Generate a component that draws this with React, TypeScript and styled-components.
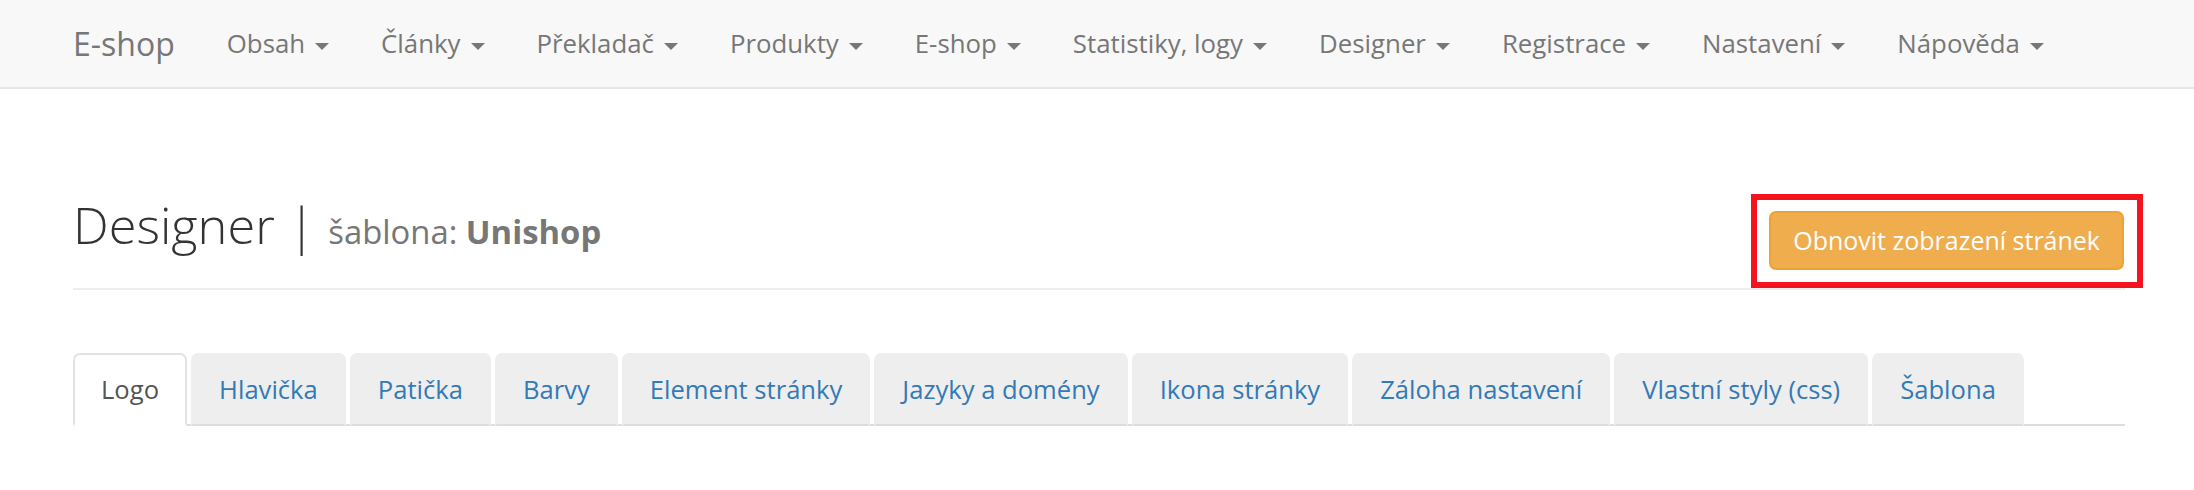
import React from "react";
import styled, { createGlobalStyle } from "styled-components";

const GlobalStyle = createGlobalStyle`
  body {
    margin: 0;
    background: #fff;
    font-family: "Open Sans", "Liberation Sans", sans-serif;
    color: #333;
  }
`;

const Navbar = styled.nav`
  display: flex;
  align-items: flex-start;
  padding-left: 47px;
  background-color: #f8f8f8;
  border-bottom: 2px solid #e7e7e7;
`;
const Brand = styled.a`
  padding: 26px;
  font-size: 32px;
  line-height: 35px;
  color: #777;
  text-decoration: none;
`;
const NavMenu = styled.ul`
  display: flex;
  list-style: none;
  margin: 0;
  padding: 0;
`;
const NavLink = styled.a`
  display: block;
  padding: 26px;
  font-size: 25.8px;
  line-height: 35px;
  color: #777;
  text-decoration: none;
  white-space: nowrap;
`;
const Caret = styled.span`
  display: inline-block;
  width: 0;
  height: 0;
  margin-left: 10px;
  vertical-align: middle;
  border-top: 7px solid #777;
  border-left: 7px solid transparent;
  border-right: 7px solid transparent;
`;

const Container = styled.div`
  padding: 0 69px 0 73px;
`;
const PageHeader = styled.div`
  display: flex;
  justify-content: space-between;
  align-items: flex-start;
  margin-top: 108px;
  padding-bottom: 18px;
  border-bottom: 2px solid #eee;
`;
const Title = styled.h1`
  margin: 0;
  font-size: 50.5px;
  font-weight: 300;
  line-height: 55px;
  color: #333;
  white-space: pre;
`;
const Small = styled.small`
  font-size: 65%;
  font-weight: 400;
  color: #777;
`;
const Highlight = styled.div`
  margin: -3px -18px -18px 0;
  padding: 11px 13px 12px 12px;
  border: 6px solid #f3141f;
`;
const Button = styled.button`
  display: block;
  padding: 10px 22px;
  font-family: inherit;
  font-size: 25px;
  line-height: 35px;
  color: #fff;
  background-color: #f0ad4e;
  border: 2px solid #eea236;
  border-radius: 7px;
  white-space: nowrap;
`;

const Tabs = styled.ul`
  display: flex;
  list-style: none;
  margin: 63px 0 0;
  padding: 0;
  border-bottom: 2px solid #ddd;
`;
const Tab = styled.li<{ $active?: boolean }>`
  margin: 0 4px -2px 0;
  padding: 17px 26px;
  font-size: 25.6px;
  line-height: 35px;
  white-space: nowrap;
  border-radius: 7px 7px 0 0;
  border: 2px solid ${(p) => (p.$active ? "#e3e3e3" : "#eee")};
  border-bottom-color: ${(p) => (p.$active ? "#fff" : "#ddd")};
  background-color: ${(p) => (p.$active ? "#fff" : "#eee")};
  color: ${(p) => (p.$active ? "#555" : "#337ab7")};
`;

const menu = [
  "Obsah",
  "Články",
  "Překladač",
  "Produkty",
  "E-shop",
  "Statistiky, logy",
  "Designer",
  "Registrace",
  "Nastavení",
  "Nápověda",
];

const tabs = [
  "Logo",
  "Hlavička",
  "Patička",
  "Barvy",
  "Element stránky",
  "Jazyky a domény",
  "Ikona stránky",
  "Záloha nastavení",
  "Vlastní styly (css)",
  "Šablona",
];

const App = () => {
  return (
    <>
      <GlobalStyle />
      <Navbar>
        <Brand>E-shop</Brand>
        <NavMenu>
          {menu.map((item) => (
            <li key={item}>
              <NavLink>
                {item}
                <Caret />
              </NavLink>
            </li>
          ))}
        </NavMenu>
      </Navbar>
      <Container>
        <PageHeader>
          <Title>
            {"Designer | "}
            <Small>
              šablona: <b>Unishop</b>
            </Small>
          </Title>
          <Highlight>
            <Button>Obnovit zobrazení stránek</Button>
          </Highlight>
        </PageHeader>
        <Tabs>
          {tabs.map((t, i) => (
            <Tab key={t} $active={i === 0}>
              {t}
            </Tab>
          ))}
        </Tabs>
      </Container>
    </>
  );
};

export default App;
